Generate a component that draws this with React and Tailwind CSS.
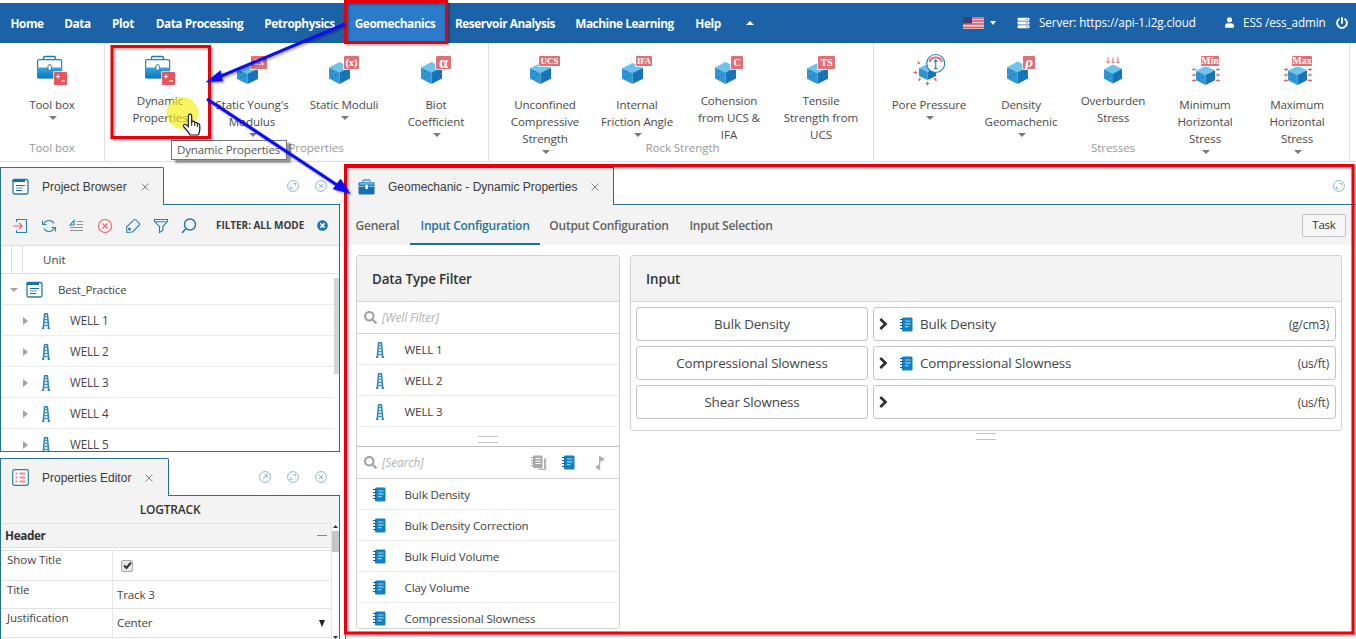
import React from "react";
import { FaSearch, FaPowerOff, FaUser, FaServer, FaTimesCircle } from "react-icons/fa";

/* ---------- icons ---------- */

function Cube({ x, y, w, h }) {
  return (
    <g transform={`translate(${x} ${y}) scale(${w / 21} ${h / 22})`}>
      <path d="M10.5 0 21 5 10.5 10.5 0 5.5Z" fill="#6cc3ee" />
      <path d="M0 5.500 10.5 10.5V22L0 16.5Z" fill="#2f95d3" />
      <path d="M21 5 10.5 10.5V22L21 16.5Z" fill="#1775b8" />
      <path d="M3 9h1.2M6 13h1.2M3 15h1.2M14 13h1.2M17 11h1.2M14 17h1.2" stroke="#14507f" strokeWidth="1" opacity="0.7" />
    </g>
  );
}

function Badge({ x, w, h = 13, label, size = 9, italic }) {
  return (
    <g>
      <rect x={x - 0.7} y="12.3" width={w + 1.4} height={h + 1.4} fill="#fff" />
      <rect x={x} y="13" width={w} height={h} rx="1" fill="#df7077" />
      <text
        x={x + w / 2}
        y={13 + h / 2 + size * 0.32}
        textAnchor="middle"
        fontSize={size}
        fontWeight="700"
        fontStyle={italic ? "italic" : "normal"}
        fill="#fff"
        fontFamily="Liberation Serif, serif"
      >
        {label}
      </text>
    </g>
  );
}

function ToolboxArt() {
  return (
    <g>
      <defs>
        <linearGradient id="caseFill" x1="0" y1="0" x2="0" y2="1">
          <stop offset="0" stopColor="#35a8e0" />
          <stop offset="1" stopColor="#0b74bb" />
        </linearGradient>
      </defs>
      <path d="M37.5 16.5V15q0-1.500 1.500-1.500h9q1.500 0 1.500 1.500v1.500" fill="none" stroke="#1b79b5" strokeWidth="1.300" />
      <rect x="31.600" y="16.600" width="24" height="18" rx="1.500" fill="#fff" stroke="#1b84c4" strokeWidth="1.200" />
      <path d="M31 24.500h25V34q0 1.500-1.500 1.500h-22Q31 35.500 31 34Z" fill="url(#caseFill)" />
      <rect x="42" y="21.500" width="3.400" height="6" rx="1.700" fill="#fff" stroke="#1b79b5" strokeWidth="0.900" />
      <rect x="47.300" y="28.300" width="14.400" height="14" fill="#fff" />
      <rect x="48" y="29" width="13" height="13" rx="1" fill="#e8555c" />
      <path d="M50 33.500h4M52 31.500v4M55.500 38h3.500" stroke="#fff" strokeWidth="1.100" />
    </g>
  );
}

function SideArrows() {
  return (
    <path
      d="M33 26.500h4M33 32h4M33 37.500h4M35 25v3M35 30.500v3M35 36v3M57 26.500h4M57 32h4M57 37.500h4M59 25v3M59 30.500v3M59 36v3"
      stroke="#d9686c"
      strokeWidth="1"
    />
  );
}

const ART = {
  toolbox: <ToolboxArt />,
  young: <><Cube x={31} y={21} w={21} h={20} /><Badge x={45} w={16} label="Es" /></>,
  moduli: <><Cube x={31} y={19} w={21} h={22} /><Badge x={46} w={15} label="(x)" size={10.5} /></>,
  biot: <><Cube x={31} y={19} w={21} h={22} /><Badge x={46} w={15} label="α" size={16} /></>,
  ucs: <><Cube x={31} y={20} w={21} h={21} /><Badge x={40} w={21} h={10} label="UCS" size={9} /></>,
  ifa: <><Cube x={31} y={20} w={21} h={21} /><Badge x={45} w={16} h={10} label="IFA" size={8.5} /></>,
  c: <><Cube x={32} y={19} w={21} h={22} /><Badge x={48} w={12} label="C" size={10} /></>,
  ts: <><Cube x={32} y={20} w={21} h={21} /><Badge x={43} w={17} label="TS" size={10} /></>,
  pore: (
    <>
      <Cube x={36} y={21} w={17} h={16} />
      <circle cx="52.700" cy="20.500" r="9" fill="#fff" stroke="#2c7fae" strokeWidth="1.200" />
      <path d="M46.500 19q1-4.500 6.200-4.500T59 19" fill="none" stroke="#df7077" strokeWidth="2" />
      <path d="M52.700 17v8M50.900 19l1.800-2.200 1.800 2.200M51 25.500h3.400" fill="none" stroke="#2c7fae" strokeWidth="1.100" />
      <path d="M30.500 29.500h4M32.500 28v3M34.500 18.500l2 2M35 20.500h2M35.500 36.500l2-1.500M36 38l1.500-2M42.500 40.500h4M44.500 38.500v4M51 35.500l2.500 2.500M51 35.500h2.500" stroke="#d9686c" strokeWidth="1.100" />
    </>
  ),
  density: <><Cube x={32} y={18.5} w={21} h={22.5} /><Badge x={48} w={12} label="ρ" size={15} italic /></>,
  over: (
    <>
      <Cube x={37} y={21.5} w={18} h={19} />
      <path d="M41 14.500v5.500M46 14.500v5.500M51 14.500v5.500M39.500 18.500l1.500 1.700 1.500-1.700M44.500 18.500l1.500 1.700 1.500-1.700M49.500 18.500l1.500 1.700 1.500-1.700" stroke="#d9686c" fill="none" strokeWidth="1" />
    </>
  ),
  min: <><SideArrows /><Cube x={37} y={23} w={19} h={19} /><Badge x={42} w={18} h={10} label="Min" size={10} /></>,
  max: <><SideArrows /><Cube x={37} y={23} w={19} h={19} /><Badge x={41} w={20} h={10} label="Max" size={10} /></>,
};

function BrowserIcon() {
  return (
    <svg width="17" height="17" viewBox="0 0 17 17" fill="none">
      <rect x="1" y="1.500" width="15" height="14.500" rx="1.500" fill="#fff" stroke="#2a7ba6" strokeWidth="1.300" />
      <path d="M0.500 2.500q0-1.500 1.500-1.500h11v3h-12.500Z" fill="#1c6f9e" />
      <path d="M4 7.500h9M4 12.500h6" stroke="#1c6f9e" strokeWidth="1.200" />
      <path d="M4 10h7" stroke="#6fb0d0" strokeWidth="1.200" />
    </svg>
  );
}

function ListIcon() {
  return (
    <svg width="17" height="17" viewBox="0 0 17 17" fill="none">
      <rect x="0.700" y="0.700" width="15.600" height="15.600" rx="2" fill="#fff" stroke="#2a7ba6" strokeWidth="1.200" />
      <path d="M3.500 4.500h2M3.500 8.500h2M3.500 12.500h2M7.500 4.500h6M7.500 8.500h6M7.500 12.500h6" stroke="#f08a8e" strokeWidth="2" />
    </svg>
  );
}

function CaseIcon() {
  return (
    <svg width="17" height="16" viewBox="0 0 17 16">
      <path d="M5 3.500V2q0-1 1-1h5q1 0 1 1v1.500" fill="none" stroke="#4b9bcc" strokeWidth="1.300" />
      <rect x="0.500" y="3" width="16" height="12.500" rx="1.500" fill="#1570b2" />
      <rect x="1.500" y="3.300" width="14" height="2.500" fill="#63b5e2" />
      <path d="M0.500 7.300h6M10.500 7.300h6" stroke="#fff" strokeWidth="0.700" />
      <rect x="7.300" y="5.800" width="2.600" height="4.500" rx="1.200" fill="#fff" />
    </svg>
  );
}

function WellIcon() {
  return (
    <svg width="8" height="16" viewBox="0 0 8 16" className="shrink-0">
      <path d="M2.200 0.700h3.600M2.600 0.500 1.200 15.500M5.400 0.500 6.800 15.500" stroke="#2a82b8" strokeWidth="1.500" fill="none" />
      <path d="M2.500 3.500h3M2 6.500h4M1.700 9.500h4.600M1.300 12.500h5.400" stroke="#3f93c4" strokeWidth="1.600" />
      <path d="M0 15.300h2.400M5.600 15.300h2.400" stroke="#2a82b8" strokeWidth="1.400" />
    </svg>
  );
}

function CurveIcon() {
  return (
    <svg width="13" height="15" viewBox="0 0 13 15" className="shrink-0">
      <rect x="2" y="0.500" width="10.500" height="14" rx="1.200" fill="#147fc3" />
      <path d="M0 2.500h3M0 5.500h3M0 8.500h3M0 11.500h3" stroke="#135f92" strokeWidth="1.100" />
      <path d="M5 4h5.500M5 6.800h5.500M5 9.600h3.500" stroke="#8fd3f5" strokeWidth="1.200" />
    </svg>
  );
}

function CurvesGrayIcon() {
  return (
    <svg width="16" height="16" viewBox="0 0 16 16">
      <path d="M13 3.500h2.200V15H7v-1.500h6Z" fill="#b5b5b5" />
      <rect x="2" y="0.500" width="9.500" height="12.500" rx="1" fill="#a9a9a9" />
      <path d="M0 2.500h3M0 5.200h3M0 8h3M0 10.700h3" stroke="#a0a0a0" strokeWidth="1" />
      <path d="M4.500 3.500h5M4.500 6h5M4.500 8.500h5" stroke="#fff" strokeWidth="1.100" />
    </svg>
  );
}

function FlagCurveIcon() {
  return (
    <svg width="11" height="16" viewBox="0 0 11 16">
      <path d="M4 0.800Q9.500 2.500 9.500 5L5.200 6.800V15Q0.800 14 0.800 11.500L4 9.500Z" fill="#b0b0b0" />
    </svg>
  );
}

function RoundIcon({ kind }) {
  return (
    <svg width="12" height="12" viewBox="0 0 12 12" fill="none" stroke="#78b2cc" strokeWidth="0.900">
      <circle cx="6" cy="6" r="5.400" />
      {kind === "close" && <path d="M4 4l4 4M8 4l-4 4" />}
      {kind === "expand" && <path d="M6.500 3.500h2v2M5.500 8.500h-2v-2" />}
      {kind === "pop" && <path d="M4 8l4-4M5 3.900h3.100V7" />}
    </svg>
  );
}

function ThinX() {
  return (
    <svg width="8" height="8" viewBox="0 0 8 8" stroke="#777" strokeWidth="0.900">
      <path d="M0.500 0.500l7 7M7.500 0.500l-7 7" />
    </svg>
  );
}

const TOOL_ICONS = [
  <g key="in"><path d="M3.500 4V1.500h10v13h-10V12" stroke="#2a82ab" /><path d="M0 8h9M6 5l3.200 3L6 11" stroke="#e8636a" /></g>,
  <g key="sync" stroke="#2a82ab"><path d="M2.500 6.500Q4 2.500 8 2.500q3.500 0 5 3M13.500 9.500Q12 13.500 8 13.500q-3.500 0-5-3" /><path d="M1.500 2.500v4h4M14.500 13.500v-4h-4" /></g>,
  <g key="abc"><path d="M7.500 3.500h6.500M7.500 6.500h6.500M1 9.500h13M1 12.500h13" stroke="#8a9298" /><path d="M1 7l4-4.500V7Z" stroke="#2a82ab" /></g>,
  <g key="del" stroke="#e8636a"><circle cx="8" cy="8" r="6.500" /><path d="M5.500 5.500l5 5M10.500 5.500l-5 5" /></g>,
  <g key="tag" stroke="#2a82ab"><path d="M2 14.500 1.500 9 9 1.700h1.700L14.500 5.500V7L7.500 14Z" /><circle cx="4.500" cy="11" r="1" fill="#2a82ab" /></g>,
  <g key="fun" stroke="#2a82ab"><path d="M1.500 1.500h13v2L9.800 8.500v4L6.500 14.500v-6L1.500 3.500ZM3 3.800h10" /></g>,
  <g key="find" stroke="#1f78a5" strokeWidth="1.400"><circle cx="9" cy="6.500" r="5.500" /><path d="M5 10.500 1 15" /></g>,
];

function Caret({ light }) {
  return <svg width="8" height="4" viewBox="0 0 8 4"><path d="M0 0h8L4 4Z" fill={light ? "#a6a6a6" : "#7a7a7a"} /></svg>;
}

/* ---------- header ---------- */

function MenuItem({ width, children, active }) {
  return (
    <div className={`${width} flex h-10 items-center justify-center whitespace-nowrap pt-px text-[11.8px] font-bold tracking-[-0.42px] text-white ${active ? "bg-[#2b7bca]" : ""}`}>
      {children}
    </div>
  );
}

function MenuBar() {
  return (
    <header className="flex h-10 shrink-0 items-center bg-[#1b62a6] text-white">
      <MenuItem width="w-[54px]">Home</MenuItem>
      <MenuItem width="w-[47px]">Data</MenuItem>
      <MenuItem width="w-[44px]">Plot</MenuItem>
      <MenuItem width="w-[109px]">Data Processing</MenuItem>
      <MenuItem width="w-[91px]">Petrophysics</MenuItem>
      <MenuItem width="w-[100px]" active>Geomechanics</MenuItem>
      <MenuItem width="w-[120px]">Reservoir Analysis</MenuItem>
      <MenuItem width="w-[119px]">Machine Learning</MenuItem>
      <MenuItem width="w-[48px]">Help</MenuItem>
      <svg className="ml-[14px]" width="8" height="4" viewBox="0 0 8 4"><path d="M0 4h8L4 0Z" fill="#fff" /></svg>
      <div className="ml-auto flex items-center pr-[8px] text-[11.7px] tracking-[-0.1px]">
        <svg width="21" height="12" viewBox="0 0 21 12">
          <rect width="21" height="12" fill="#e9c6cc" />
          <path d="M0 1h21M0 4h21M0 7h21M0 10.500h21" stroke="#d3596a" strokeWidth="1.600" />
          <rect width="9" height="6.500" fill="#3b4477" />
        </svg>
        <svg className="ml-[6px]" width="6" height="4" viewBox="0 0 6 4"><path d="M0 0h6L3 4Z" fill="#fff" /></svg>
        <FaServer className="ml-[21px] h-[12px] w-[13px]" />
        <span className="ml-[9px] w-[159px] whitespace-nowrap">Server: https://api-1.i2g.cloud</span>
        <FaUser className="ml-[27px] h-[11px] w-[9px]" />
        <span className="ml-[9px] w-[82px] whitespace-nowrap">ESS /ess_admin</span>
        <FaPowerOff className="ml-[11px] h-[12px] w-[12px]" />
      </div>
    </header>
  );
}

function RibbonItem({ art, lines, arrow }) {
  return (
    <div className="flex w-[92px] shrink-0 flex-col items-center">
      <svg width="92" height="46" viewBox="0 0 92 46" className="shrink-0">{ART[art]}</svg>
      <div className={`flex flex-col items-center whitespace-nowrap text-[11.6px] leading-[17px] tracking-[-0.1px] text-[#4a4a4a] ${arrow ? "pt-[7px]" : "pt-[3px]"}`}>
        {lines.map((l) => <span key={l}>{l}</span>)}
      </div>
      {arrow && <div className="pl-px pt-[3px] leading-none"><Caret /></div>}
    </div>
  );
}

function RibbonGroup({ label, width, pad, items }) {
  return (
    <section className={`${width} flex shrink-0 flex-col border-r border-[#e2e2e2]`}>
      <div className={`flex h-[97px] ${pad}`}>{items.map((i) => <RibbonItem key={i.art + i.lines[0]} {...i} />)}</div>
      <div className="text-center text-[11.6px] leading-4 tracking-[-0.1px] text-[#999]">{label}</div>
    </section>
  );
}

function Ribbon() {
  return (
    <div className="flex h-[119px] shrink-0 border-b border-[#dedede] bg-white">
      <RibbonGroup label="Tool box" width="w-[105px]" pad="pl-[6px]" items={[{ art: "toolbox", lines: ["Tool box"], arrow: true }]} />
      <RibbonGroup
        label={<span className="pl-[39px]">Properties</span>}
        width="w-[384px]"
        pad="pl-[9px]"
        items={[
          { art: "toolbox", lines: ["Dynamic", "Properties"] },
          { art: "young", lines: ["Static Young's", "Modulus"], arrow: true },
          { art: "moduli", lines: ["Static Moduli"], arrow: true },
          { art: "biot", lines: ["Biot", "Coefficient"], arrow: true },
        ]}
      />
      <RibbonGroup
        label={<span className="pl-[3px]">Rock Strength</span>}
        width="w-[385px]"
        pad="pl-[10px]"
        items={[
          { art: "ucs", lines: ["Unconfined", "Compressive", "Strength"], arrow: true },
          { art: "ifa", lines: ["Internal", "Friction Angle"], arrow: true },
          { art: "c", lines: ["Cohension", "from UCS &", "IFA"] },
          { art: "ts", lines: ["Tensile", "Strength from", "UCS"] },
        ]}
      />
      <RibbonGroup
        label={<span className="pl-[3px]">Stresses</span>}
        width="w-[476px]"
        pad="pl-[9px]"
        items={[
          { art: "pore", lines: ["Pore Pressure"], arrow: true },
          { art: "density", lines: ["Density", "Geomachenic"], arrow: true },
          { art: "over", lines: ["Overburden", "Stress"] },
          { art: "min", lines: ["Minimum", "Horizontal", "Stress"], arrow: true },
          { art: "max", lines: ["Maximum", "Horizontal", "Stress"], arrow: true },
        ]}
      />
    </div>
  );
}

/* ---------- panels ---------- */

function PanelTab({ width, icon, title, children }) {
  return (
    <div className="flex h-[37px] shrink-0">
      <div className={`${width} z-10 flex h-[38px] shrink-0 items-center rounded-tr-[2px] border border-b-0 border-[#2c6f8c] bg-[#f3f3f3] pl-[11px]`}>
        {icon}
        <span className="ml-[13px] mr-[14px] whitespace-nowrap font-['Liberation_Sans',Arial,sans-serif] text-[12px] text-[#3a3a3a]">{title}</span>
        <ThinX />
      </div>
      <div className="flex flex-1 items-center justify-end gap-4 pr-[13px]">{children}</div>
    </div>
  );
}

function ProjectBrowser() {
  return (
    <section className="flex h-[285px] shrink-0 flex-col">
      <PanelTab width="w-[164px]" icon={<BrowserIcon />} title="Project Browser">
        <RoundIcon kind="expand" />
        <RoundIcon kind="close" />
      </PanelTab>
      <div className="flex min-h-0 flex-1 flex-col border border-[#2c6f8c] bg-white">
        <div className="flex h-[40px] shrink-0 items-center bg-[#f3f3f3] pl-[12px] pt-px">
          <div className="flex shrink-0 gap-[12px]">
            {TOOL_ICONS.map((g, i) => (
              <svg key={i} width="16" height="16" viewBox="0 0 16 16" fill="none" strokeWidth="1.100">{g}</svg>
            ))}
          </div>
          <span className="ml-[19px] w-[87px] whitespace-nowrap text-[10px] font-bold tracking-[-0.05px] text-[#3a3a3a]">FILTER: ALL MODE</span>
          <FaTimesCircle className="ml-[14px] h-[11px] w-[11px] text-[#1f78a5]" />
        </div>
        <div className="flex h-[29px] shrink-0 border-y border-[#dfdfdf]">
          <div className="w-[11px] border-r border-[#dedede]" />
          <div className="w-[11px] border-r border-[#dedede]" />
          <span className="pl-[20px] text-[11.6px] leading-[28px] text-[#444]">Unit</span>
        </div>
        <div className="flex min-h-0 flex-1 overflow-hidden">
          <div className="flex-1">
            <div className="flex h-[31px] items-center border-b border-[#ececec] pl-[9px] pt-px">
              <Caret light />
              <span className="ml-[8px]"><BrowserIcon /></span>
              <span className="ml-[15px] text-[11.5px] tracking-[-0.2px] text-[#444]">Best_Practice</span>
            </div>
            {[1, 2, 3, 4, 5].map((n) => (
              <div key={n} className="flex h-[31px] items-center border-b border-[#ececec] pl-[22px] pt-px">
                <svg width="5" height="8" viewBox="0 0 5 8"><path d="M0 0v8l5-4Z" fill="#a3a3a3" /></svg>
                <span className="ml-[14px]"><WellIcon /></span>
                <span className="ml-[20px] text-[11.7px] tracking-[-0.1px] text-[#444]">WELL {n}</span>
              </div>
            ))}
          </div>
          <div className="mt-[4px] h-[96px] w-[5px] bg-[#d2d5d8]" />
        </div>
      </div>
    </section>
  );
}

function PropertyRow({ name, height, children }) {
  return (
    <div className={`${height} flex shrink-0 border-b border-[#e2e2e2]`}>
      <div className="w-[112px] border-r border-[#e8e8e8] pl-[6px] text-[11.6px] leading-[18px] tracking-[-0.1px] text-[#444]">{name}</div>
      <div className="flex flex-1 items-center pl-[4px] text-[11.6px] tracking-[-0.15px] text-[#444]">{children}</div>
    </div>
  );
}

function PropertiesEditor() {
  return (
    <section className="mt-[6px] flex h-[181px] shrink-0 flex-col">
      <PanelTab width="w-[169px]" icon={<ListIcon />} title="Properties Editor">
        <RoundIcon kind="pop" />
        <RoundIcon kind="expand" />
        <RoundIcon kind="close" />
      </PanelTab>
      <div className="flex min-h-0 flex-1 flex-col border border-b-0 border-[#2c6f8c] bg-white">
        <div className="h-[27px] shrink-0 bg-[#f3f3f3] text-center text-[12px] font-semibold leading-[27px] tracking-[-0.2px] text-[#333]">LOGTRACK</div>
        <div className="flex min-h-0 flex-1 overflow-hidden">
          <div className="flex flex-1 flex-col">
            <div className="flex h-[25px] shrink-0 items-center justify-between border-y border-[#e2e2e2] bg-[#f3f3f3] pl-[4px] pr-[4px] text-[11.8px] font-bold tracking-[-0.4px] text-[#333]">
              Header<span className="h-px w-[10px] bg-[#888]" />
            </div>
            <div className="mt-[2px] flex flex-col border-t border-[#e2e2e2]">
              <PropertyRow name="Show Title" height="h-[30px]">
                <span className="ml-[4px] flex h-[12px] w-[12px] items-center justify-center rounded-[2px] border border-[#aaa] bg-[#e8e8e8]">
                  <svg width="9" height="9" viewBox="0 0 9 9"><path d="M1 4.500 3.500 7 8 1.500" stroke="#333" strokeWidth="2" fill="none" /></svg>
                </span>
              </PropertyRow>
              <PropertyRow name="Title" height="h-[28px]">Track 3</PropertyRow>
              <PropertyRow name="Justification" height="h-[29px]">
                <span className="flex-1">Center</span>
                <svg className="mr-[6px]" width="6" height="7" viewBox="0 0 6 7"><path d="M0 0h6L3 7Z" fill="#222" /></svg>
              </PropertyRow>
            </div>
          </div>
          <div className="flex w-[8px] flex-col items-center justify-between border-l border-[#e2e2e2] pt-[2px]">
            <div className="flex w-full flex-col items-center gap-[3px]">
              <svg width="5" height="3" viewBox="0 0 5 3"><path d="M0 3h5L2.500 0Z" fill="#333" /></svg>
              <div className="h-[21px] w-full bg-[#c6c6c6]" />
            </div>
            <svg width="5" height="3" viewBox="0 0 5 3"><path d="M0 0h5L2.500 3Z" fill="#333" /></svg>
          </div>
        </div>
      </div>
    </section>
  );
}

function SearchRow({ text, children }) {
  return (
    <div className="flex h-[32px] shrink-0 items-center border-b border-[#d2d2d2] pl-[7px]">
      <FaSearch className="h-[13px] w-[13px] text-[#a2a2a2]" />
      <span className="ml-[5px] flex-1 text-[12px] italic tracking-[-0.15px] text-[#b3b3b3]">{text}</span>
      {children}
    </div>
  );
}

function ListRow({ icon, text }) {
  return (
    <div className="flex h-[31px] shrink-0 items-center border-b border-[#ececec] pt-px">
      <span className="flex w-[44px] justify-center pl-px">{icon}</span>
      <span className="ml-[3px] whitespace-nowrap pl-[0.5px] text-[11.6px] tracking-[-0.13px] text-[#3e3e3e]">{text}</span>
    </div>
  );
}

function Grip() {
  return <div className="h-[7px] w-[20px] border-y border-[#c4c4c4]" />;
}

function DataTypeFilter() {
  return (
    <section className="flex h-[374px] w-[264px] shrink-0 flex-col overflow-hidden rounded-[3px] border border-[#d2d2d2] bg-white">
      <h2 className="h-[46px] shrink-0 border-b border-[#d2d2d2] bg-[#f3f3f3] pl-[15px] text-[13.4px] font-semibold leading-[46px] tracking-[-0.13px] text-[#333]">Data Type Filter</h2>
      <SearchRow text="[Well Filter]" />
      {[1, 2, 3].map((n) => <ListRow key={n} icon={<WellIcon />} text={`WELL ${n}`} />)}
      <div className="flex h-[20px] shrink-0 items-center justify-center border-b border-[#bdbdbd] pt-[5px]"><Grip /></div>
      <SearchRow text="[Search]">
        <div className="flex items-center pr-[13px]">
          <CurvesGrayIcon />
          <span className="ml-[15px] mr-[20px]"><CurveIcon /></span>
          <FlagCurveIcon />
        </div>
      </SearchRow>
      {["Bulk Density", "Bulk Density Correction", "Bulk Fluid Volume", "Clay Volume", "Compressional Slowness"].map((t) => (
        <ListRow key={t} icon={<CurveIcon />} text={t} />
      ))}
    </section>
  );
}

function InputRow({ name, value, unit }) {
  return (
    <div className="flex h-[34px] gap-[5px] text-[13.4px] tracking-[-0.14px] text-[#444]">
      <div className="flex w-[232px] items-center justify-center rounded-[3px] border border-[#c4c4c4] bg-white">{name}</div>
      <div className="flex flex-1 items-center rounded-[3px] border border-[#c4c4c4] bg-white pl-[5px] pr-[6px]">
        <svg width="9" height="12" viewBox="0 0 9 12"><path d="M1.300 1 6.500 6 1.300 11" stroke="#2f2f2f" strokeWidth="2.700" fill="none" /></svg>
        {value && <span className="ml-[12px]"><CurveIcon /></span>}
        <span className="ml-[7px] flex-1">{value}</span>
        <span className="pt-px text-[11.8px]">{unit}</span>
      </div>
    </div>
  );
}

function Workspace() {
  const tab = "flex h-[38px] items-center justify-center whitespace-nowrap pt-[3px] text-[12px] font-semibold tracking-[-0.26px] text-[#626262]";
  return (
    <main className="flex flex-1 flex-col">
      <div className="flex h-[38px] shrink-0">
        <div className="flex h-[38px] w-[269px] shrink-0 items-center border-r border-t border-[#2c6f8c] bg-[#f3f3f3] pl-[13px]">
          <CaseIcon />
          <span className="ml-[13px] mr-[14px] whitespace-nowrap font-['Liberation_Sans',Arial,sans-serif] text-[12px] text-[#3a3a3a]">Geomechanic - Dynamic Properties</span>
          <ThinX />
        </div>
        <div className="flex flex-1 items-center justify-end border-b border-[#2c6f8c] pr-[11px]"><RoundIcon kind="expand" /></div>
      </div>
      <div className="flex min-h-0 flex-1 flex-col border-l border-[#2c6f8c]">
        <nav className="flex h-[40px] shrink-0 items-center justify-between bg-[#f3f3f3] pr-[10px]">
          <div className="flex h-full">
            <div className={`${tab} ml-[1px] w-[61px]`}>General</div>
            <div className="ml-[2px] h-[40px] border-b-2 border-[#1f6e96]"><div className={`${tab} w-[130px] !text-[#2373a0]`}>Input Configuration</div></div>
            <div className={`${tab} w-[138px]`}>Output Configuration</div>
            <div className={`${tab} w-[106px]`}>Input Selection</div>
          </div>
          <button className="h-[23px] w-[44px] rounded-[2px] border border-[#c2c2c2] bg-[#f6f6f6] text-[11.5px] leading-[20px] tracking-[-0.2px] text-[#333]">Task</button>
        </nav>
        <div className="flex min-h-0 flex-1 items-start gap-[10px] pl-[10px] pr-[14px] pt-[10px]">
          <DataTypeFilter />
          <div className="flex flex-1 flex-col items-center">
            <section className="h-[176px] w-full rounded-[3px] border border-[#d2d2d2] bg-white">
              <h2 className="h-[46px] border-b border-[#d2d2d2] bg-[#f3f3f3] pl-[15px] text-[13.4px] font-semibold leading-[46px] tracking-[-0.1px] text-[#333]">Input</h2>
              <div className="flex flex-col gap-[5px] px-[5px] pt-[5px]">
                <InputRow name="Bulk Density" value="Bulk Density" unit="(g/cm3)" />
                <InputRow name="Compressional Slowness" value="Compressional Slowness" unit="(us/ft)" />
                <InputRow name="Shear Slowness" unit="(us/ft)" />
              </div>
            </section>
            <div className="mt-[2px]"><Grip /></div>
          </div>
        </div>
      </div>
    </main>
  );
}

/* ---------- callouts drawn over the window ---------- */

function Callouts() {
  return (
    <>
      <div className="pointer-events-none absolute left-[171px] top-[140px] flex h-[20px] w-[116px] items-center border border-[#777] bg-white pl-[5px] text-[11.5px] tracking-[-0.12px] text-[#575757] shadow-[4px_3px_2px_rgba(0,0,0,0.4)]">
        <span className="whitespace-nowrap">Dynamic Properties</span>
      </div>
      <svg className="pointer-events-none absolute left-0 top-0" width="1356" height="639" viewBox="0 0 1356 639">
        <defs>
          <filter id="soft" x="-5%" y="-5%" width="110%" height="110%">
            <feDropShadow dx="1.500" dy="1.500" stdDeviation="1" floodColor="#000" floodOpacity="0.350" />
          </filter>
        </defs>
        <circle cx="182.500" cy="113" r="16" fill="#f5ee00" opacity="0.620" />
        <g fill="none" stroke="#e8060a" strokeWidth="3" filter="url(#soft)">
          <rect x="345.500" y="1.500" width="101" height="41" />
          <rect x="112" y="46.500" width="97.500" height="91" />
          <rect x="345.500" y="165.500" width="1007.500" height="467.500" />
        </g>
        <g stroke="#0a0af0" strokeWidth="3" fill="#0a0af0" filter="url(#soft)">
          <path d="M345 24 219 77" />
          <path d="M206 82 220.500 70.500 222.500 81Z" strokeWidth="0.500" />
          <path d="M207 99 340 187" />
          <path d="M350 193.500 333 189 340.500 179Z" strokeWidth="0.500" />
        </g>
        <path
          d="M188.300 116.500q0-2.500 1.700-2.500t1.700 2.500v6q0-1.300 1.500-1.300 1.300 0 1.500 1.500 2.300-1 2.600 1 2.500-0.500 2.500 2v4q0 3-1.800 5.300H190q-1-2.500-3.500-5l-3-3.500q-0.500-1.700 1-2.200 1.300-0.300 3.800 2.200Z"
          fill="#fff"
          stroke="#1a1a1a"
          strokeWidth="1.200"
        />
        <path d="M191.700 122v4M194.700 123v3M197.300 124v3" stroke="#1a1a1a" strokeWidth="1" />
      </svg>
    </>
  );
}

export default function App() {
  return (
    <div className="relative flex h-[639px] w-[1356px] flex-col overflow-hidden bg-white pt-[3px] font-['Open_Sans','Noto_Sans',sans-serif]">
      <MenuBar />
      <Ribbon />
      <div className="flex min-h-0 flex-1 pt-[5px]">
        <aside className="flex w-[340px] shrink-0 flex-col">
          <ProjectBrowser />
          <PropertiesEditor />
        </aside>
        <div className="flex flex-1 pl-[5px]"><Workspace /></div>
      </div>
      <Callouts />
    </div>
  );
}
